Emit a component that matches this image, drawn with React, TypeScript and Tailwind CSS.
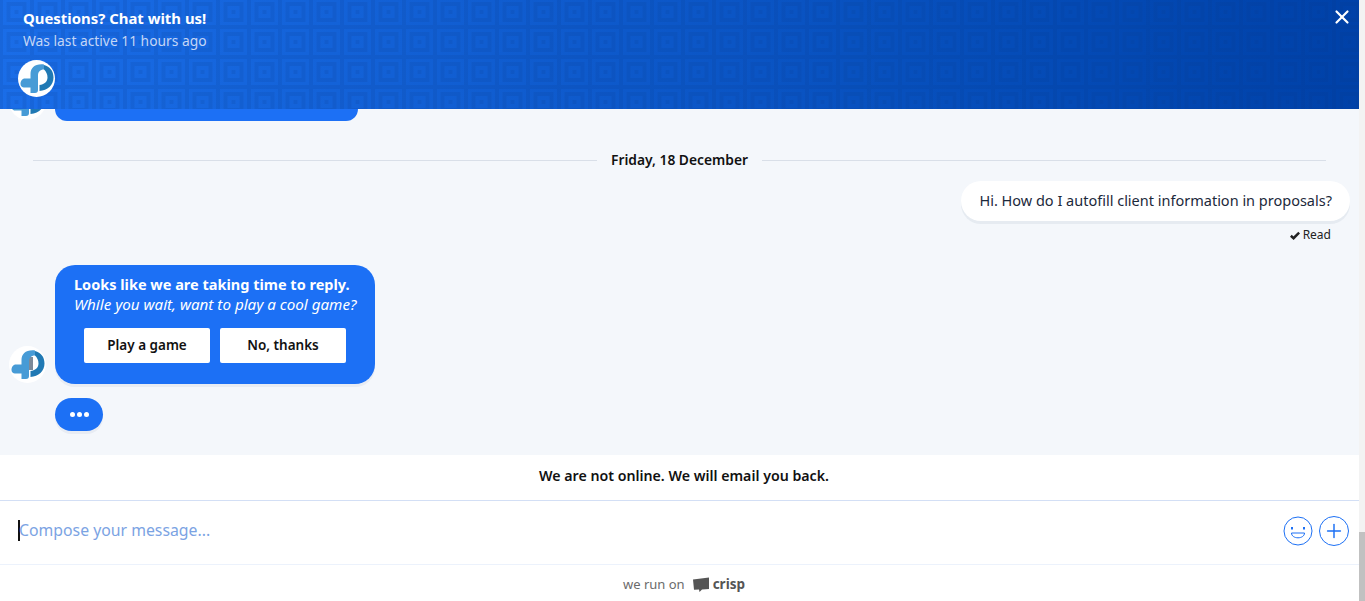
import { X, Plus } from "lucide-react";

function Logo({ size = 37, shade = false, className = "" }: { size?: number; shade?: boolean; className?: string }) {
  return (
    <div
      className={"rounded-full bg-white flex items-center justify-center shrink-0 " + className}
      style={{ width: size, height: size }}
    >
      <svg viewBox="0 0 37 37" width={size} height={size}>
        {shade && <path d="M20 11h4v13h-5v-9c0-2 0-3 1-4z" fill="#7d8a99" />}
        <path
          d="M26 4.500C17 3.500 12.500 8 12.500 14v4.500H7C4 18.500 2.500 21 2.500 24c0 2 1.500 3.500 3.500 3.500h6.500V33H17c2 0 3-1 3-3V15c0-3 2-5.500 6-5.500z"
          fill="#479bd6"
        />
        <path
          d="M26 5c6 1.500 9.500 6 9.500 12.500 0 7.500-6 13-14 13.500v-6c4.500-.5 8-3 8-7.500 0-3.500-1.500-6-3.500-8z"
          fill="#2079b4"
        />
      </svg>
    </div>
  );
}

function HeaderPattern() {
  return (
    <svg className="absolute inset-0 w-full h-full" aria-hidden="true">
      <defs>
        <pattern id="squares" width="31" height="30" patternUnits="userSpaceOnUse" x="1" y="-3">
          <rect x="0" y="0" width="31" height="30" fill="none" stroke="#06337f" strokeOpacity="0.13" strokeWidth="4" />
          <rect x="7.500" y="7" width="16" height="16" fill="none" stroke="#06337f" strokeOpacity="0.13" strokeWidth="4" />
          <rect x="13.500" y="13" width="4" height="4" fill="#06337f" fillOpacity="0.13" />
        </pattern>
      </defs>
      <rect width="100%" height="100%" fill="url(#squares)" />
    </svg>
  );
}

function Smile() {
  return (
    <svg viewBox="0 0 30 30" width="30" height="30">
      <circle cx="15" cy="15" r="14" fill="none" stroke="#1c70f5" strokeWidth="1" />
      <rect x="8" y="11" width="2" height="2.500" fill="#1c70f5" />
      <rect x="20" y="11" width="2" height="2.500" fill="#1c70f5" />
      <path d="M8.500 17h13c0 3-3 4.800-6.500 4.800S8.500 20 8.500 17z" fill="none" stroke="#1c70f5" strokeWidth="1" />
    </svg>
  );
}

export default function App() {
  return (
    <div className="h-[601px] w-[1365px] overflow-hidden flex bg-white font-['Noto_Sans',sans-serif]">
      <div className="w-[1359px] flex flex-col">
        <header className="relative h-[109px] shrink-0 bg-gradient-to-r from-[#1a6de8] to-[#0041a8] text-white">
          <HeaderPattern />
          <div className="relative flex justify-between pl-[23px] pr-[6px] pt-[8px]">
            <div>
              <h1 className="text-[14.9px] font-bold leading-[20px]">Questions? Chat with us!</h1>
              <p className="text-[13.8px] leading-[20px] mt-[3px] text-[#c4d6f6]">Was last active 11 hours ago</p>
            </div>
            <X size={22} strokeWidth={2.4} className="-mt-[2px]" />
          </div>
          <Logo className="relative ml-[18px] mt-[9px]" />
        </header>

        <main className="h-[346px] shrink-0 bg-[#f4f7fb] overflow-hidden flex flex-col">
          <div className="h-[12px] flex items-end overflow-hidden pl-[9px] gap-[9px] shrink-0">
            <Logo className="mb-[1px]" />
            <div className="w-[303px] h-[12px] bg-[#1c70f5] rounded-b-[20px]" />
          </div>

          <div className="flex items-center pl-[33px] pr-[33px] mt-[29px] h-[20px] gap-[14px] shrink-0">
            <div className="flex-1 h-px bg-[#d9dfe8]" />
            <span className="text-[13.8px] font-semibold text-[#111]">Friday, 18 December</span>
            <div className="flex-1 h-px bg-[#d9dfe8]" />
          </div>

          <div className="flex flex-col items-end pr-[9px] mt-[11px] shrink-0">
            <div className="h-[40px] flex items-center px-[18px] bg-white rounded-[20px] text-[14.5px] text-[#1c293b] shadow-[0_3px_0_rgba(220,226,235,0.6)]">
              Hi. How do I autofill client information in proposals?
            </div>
            <div className="flex items-center gap-[3px] mt-[6px] mr-[19px] text-[12px] leading-[16px] text-[#222]">
              <svg viewBox="0 0 12 10" width="10" height="9">
                <path d="M1 5.300l3.300 3L11 1.500" fill="none" stroke="#222" strokeWidth="3" />
              </svg>
              Read
            </div>
          </div>

          <div className="flex items-end pl-[9px] gap-[9px] mt-[22px] shrink-0">
            <Logo shade className="mb-[1px]" />
            <div className="w-[320px] h-[119px] bg-[#1c70f5] rounded-[20px] pt-[9px] text-white shadow-[0_3px_0_rgba(220,226,235,0.5)]">
              <p className="text-[14.5px] font-bold leading-[20px] pl-[19px]">Looks like we are taking time to reply.</p>
              <p className="text-[15.2px] italic leading-[20px] pl-[19px]">While you wait, want to play a cool game?</p>
              <div className="flex gap-[10px] pl-[29px] mt-[14px]">
                <button className="w-[126px] h-[35px] bg-white rounded-[2px] text-[13.5px] font-semibold text-[#111]">Play a game</button>
                <button className="w-[126px] h-[35px] bg-white rounded-[2px] text-[13.5px] font-semibold text-[#111]">No, thanks</button>
              </div>
            </div>
          </div>

          <div className="ml-[55px] mt-[14px] w-[48px] h-[33px] shrink-0 rounded-[17px] bg-[#1c70f5] flex items-center justify-center gap-[2px] shadow-[0_3px_0_rgba(220,226,235,0.5)]">
            <span className="w-[5px] h-[5px] rounded-full bg-white" />
            <span className="w-[5px] h-[5px] rounded-full bg-white" />
            <span className="w-[5px] h-[5px] rounded-full bg-white" />
          </div>
        </main>

        <div className="h-[45px] shrink-0 flex items-center justify-center pl-[9px] pb-[4px] text-[14.2px] font-semibold text-[#111]">
          We are not online. We will email you back.
        </div>

        <div className="h-[65px] shrink-0 border-y border-t-[#d3dff5] border-b-[#ecf2fc] flex items-center pl-[18px] pr-[10px] pb-[4px]">
          <span className="w-[2px] h-[21px] bg-[#111]" />
          <span className="text-[15.8px] text-[#7ba3e3] flex-1 -ml-[1px]">Compose your message...</span>
          <div className="flex items-center gap-[6px]">
            <Smile />
            <div className="w-[30px] h-[30px] rounded-full border border-[#1c70f5] flex items-center justify-center text-[#1c70f5]">
              <Plus size={22} strokeWidth={1.6} />
            </div>
          </div>
        </div>

        <div className="h-[36px] shrink-0 flex items-center justify-center pl-[9px] pt-[3px] text-[13px] text-[#6b6b6b]">
          <span>we run on</span>
          <svg viewBox="0 0 18 16" width="18" height="16" className="ml-[7px] mr-[3px]">
            <path d="M1 2.500L17 .5v11.500l-7 .500-2.500 2.500-.5-2.500-5 .300z" fill="#555" />
          </svg>
          <span className="text-[13.5px] font-bold text-[#555]">crisp</span>
        </div>
      </div>

      <div className="w-[6px] bg-[#f3f3f3] flex flex-col justify-end">
        <div className="h-[69px] bg-[#c1c1c1]" />
      </div>
    </div>
  );
}
